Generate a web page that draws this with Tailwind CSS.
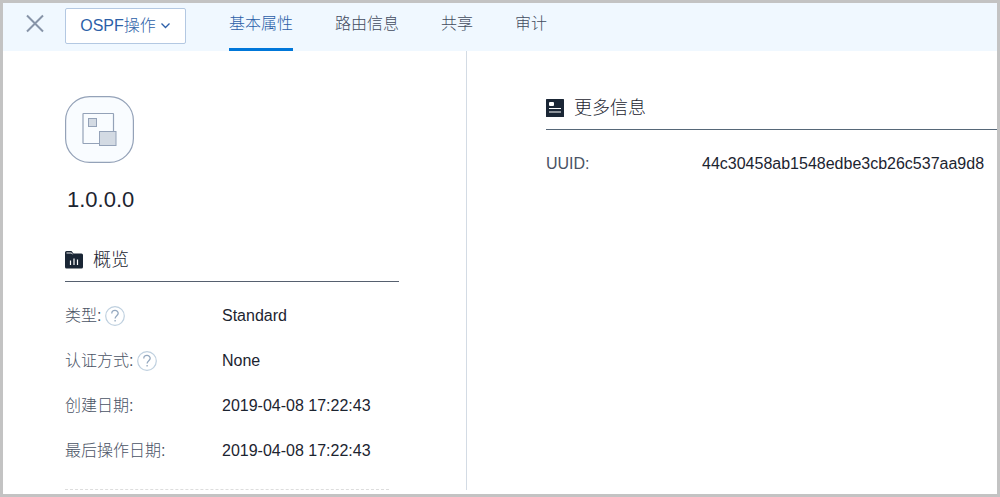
<!DOCTYPE html>
<html lang="zh-CN">
<head>
  <meta charset="UTF-8">
  <meta name="viewport" content="width=device-width, initial-scale=1.0">
  <title>OSPF 1.0.0.0</title>
  <script src="https://cdn.jsdelivr.net/npm/@tailwindcss/browser@4"></script>
</head>
<body class="flex h-screen flex-col overflow-hidden border-3 border-[#c3c3c3] bg-white font-['Liberation_Sans','Noto_Sans_CJK_SC',sans-serif] text-base font-light text-[#1c2430]">

  <!-- toolbar -->
  <header class="flex h-12 shrink-0 items-start bg-[#f0f8ff] pl-[22px]">
    <button id="closeBtn" type="button" aria-label="关闭" class="mt-[11px] mr-5 cursor-pointer text-[#8794a8]">
      <svg class="size-5" viewBox="0 0 20 20" fill="none" stroke="currentColor" stroke-width="2">
        <path d="M2 1.5 18 17.5M18 1.5 2 17.5" />
      </svg>
    </button>
    <button id="actionToggle" type="button" class="mt-[5px] flex h-9 w-[121px] cursor-pointer items-center justify-center gap-1 rounded-xs border border-[#b3c8e2] bg-white text-[#2c5fa8]">
      OSPF操作
      <svg class="h-3 w-[11px]" viewBox="0 0 11 12" fill="none" stroke="currentColor" stroke-width="1.3">
        <path d="M1.5 3.5 5.5 7.5 9.5 3.5" />
      </svg>
    </button>
    <nav class="ml-[43px] flex h-full gap-[42px] leading-[41px] whitespace-nowrap text-[#424b5e]">
      <a href="#" class="border-b-3 border-[#0077d9] text-[#2c5fa8]">基本属性</a>
      <a href="#">路由信息</a>
      <a href="#">共享</a>
      <a href="#">审计</a>
    </nav>
  </header>

  <main class="flex min-h-0 flex-1 pb-1">
    <section class="w-[464px] shrink-0 border-r border-[#d3dbe4] pt-[45px] pr-[67px] pl-[62px]">
      <svg class="h-[67px] w-[69px]" viewBox="0 0 69 67" fill="none" stroke="#94a2b8">
        <rect x=".6" y=".6" width="67.8" height="65.8" rx="24" fill="#f9fcff" stroke-width="1.2" />
        <rect x="18" y="17.5" width="30.5" height="30" rx=".5" stroke-width="1.2" />
        <rect x="23.5" y="22.5" width="8" height="8" fill="#d3dae3" />
        <rect x="34.5" y="35.5" width="16.5" height="14" fill="#d3dae3" />
      </svg>
      <h1 class="mt-[21px] pl-0.5 text-[22px] leading-8 font-normal">1.0.0.0</h1>

      <h2 class="mt-7 flex h-[38px] items-start gap-[10px] border-b border-[#56606f] text-lg leading-8 font-light">
        <svg class="mt-[7px] size-[18px]" viewBox="0 0 18 18" fill="none">
          <path d="M0 1.5Q0 0 1.5 0H6.5L8.5 2.5H16.5Q18 2.5 18 4V16Q18 17.5 16.5 17.5H1.5Q0 17.5 0 16Z" fill="#1a2635" />
          <path d="M1.5 2H6.5L7.5 3.3" stroke="#fff" stroke-width=".9" />
          <path d="M5.5 9.5V14M9 7.5V14M12.5 8.5V14" stroke="#fff" stroke-width="1.2" />
        </svg>
        概览
      </h2>
      <dl class="mt-[11px] grid grid-cols-[157px_1fr] leading-[45px]">
        <dt class="flex items-center gap-1 text-[#4a5365]">类型:
          <button type="button" aria-label="类型说明" class="cursor-pointer">
            <svg class="size-5" viewBox="0 0 20 20" fill="none">
              <circle cx="10" cy="10" r="9.3" stroke="#bfd0df" stroke-width="1.2" />
              <path d="M6.8 7.5C6.8 3.4 13.2 3.5 13.2 7.3C13.2 9.6 10.1 9.8 10.1 12.5M10.1 14V15.5" stroke="#94a8bf" stroke-width="1.3" />
            </svg>
          </button>
        </dt>
        <dd>Standard</dd>
        <dt class="flex items-center gap-1 text-[#4a5365]">认证方式:
          <button type="button" aria-label="认证方式说明" class="cursor-pointer">
            <svg class="size-5" viewBox="0 0 20 20" fill="none">
              <circle cx="10" cy="10" r="9.3" stroke="#bfd0df" stroke-width="1.2" />
              <path d="M6.8 7.5C6.8 3.4 13.2 3.5 13.2 7.3C13.2 9.6 10.1 9.8 10.1 12.5M10.1 14V15.5" stroke="#94a8bf" stroke-width="1.3" />
            </svg>
          </button>
        </dt>
        <dd>None</dd>
        <dt class="text-[#4a5365]">创建日期:</dt>
        <dd>2019-04-08 17:22:43</dd>
        <dt class="text-[#4a5365]">最后操作日期:</dt>
        <dd>2019-04-08 17:22:43</dd>
      </dl>
      <hr class="mt-4 mr-[10px] border-dashed border-[#dddddd]">
    </section>

    <section class="min-w-0 flex-1 pt-[41px] pl-[79px]">
      <h2 class="flex h-[38px] items-start gap-[10px] border-b border-[#566778] text-lg leading-8 font-light">
        <svg class="mt-[7px] size-[18px]" viewBox="0 0 18 18" fill="none">
          <rect width="18" height="18" rx=".5" fill="#1a2635" />
          <rect x="3" y="3" width="5" height="4" rx="1" fill="#fff" />
          <path d="M3 9.5H15M3 13H15" stroke="#fff" stroke-width="1.1" />
        </svg>
        更多信息
      </h2>
      <dl class="mt-[11px] grid grid-cols-[156px_1fr] leading-[45px]">
        <dt class="text-[#4a5365]">UUID:</dt>
        <dd>44c30458ab1548edbe3cb26c537aa9d8</dd>
      </dl>
    </section>
  </main>

  <script>
    // highlight the tab that was clicked
    const tabs = document.querySelectorAll('nav a');
    tabs.forEach((tab) => {
      tab.addEventListener('click', (e) => {
        e.preventDefault();
        tabs.forEach((t) => t.classList.remove('border-b-3', 'border-[#0077d9]', 'text-[#2c5fa8]'));
        tab.classList.add('border-b-3', 'border-[#0077d9]', 'text-[#2c5fa8]');
      });
    });
  </script>
</body>
</html>
